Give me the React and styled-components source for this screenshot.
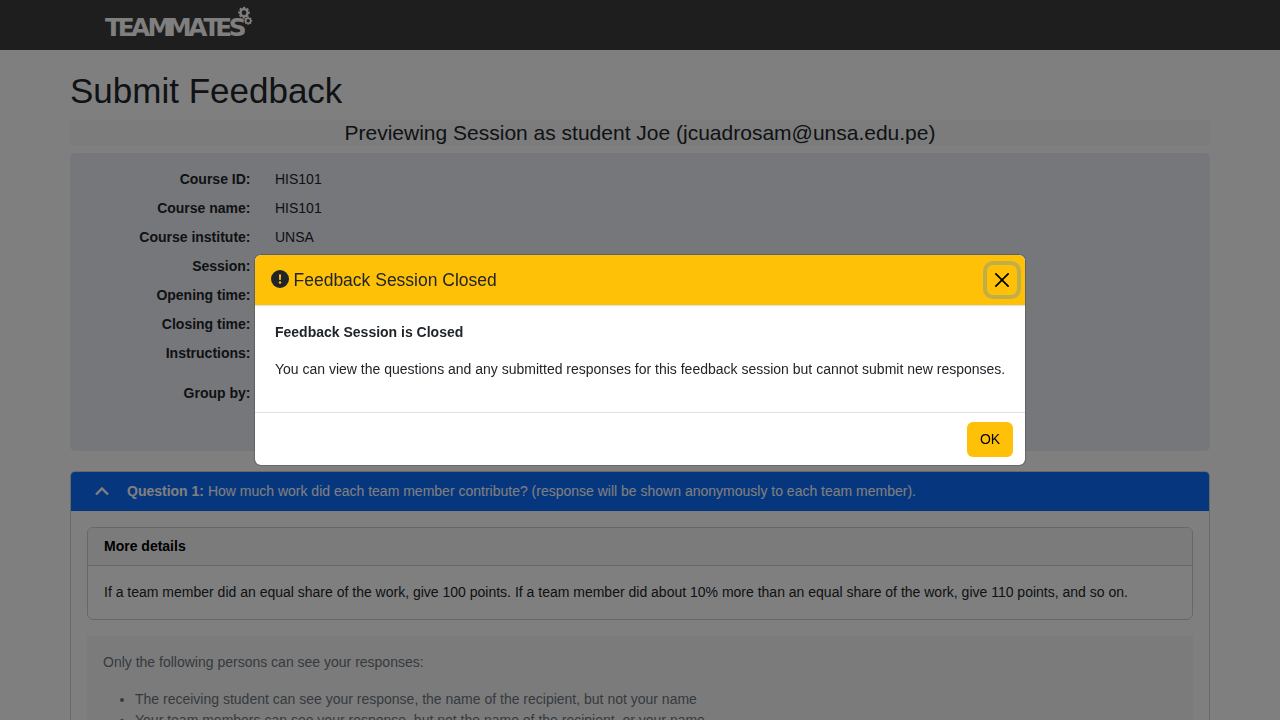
import React from "react";
import styled, { createGlobalStyle } from "styled-components";

const Global = createGlobalStyle`
  *, *::before, *::after { box-sizing: border-box; }
  html, body { margin: 0; height: 720px; overflow: hidden; }
  body {
    background: #fff;
    color: #212529;
    font: 400 14px/21px "Liberation Sans", Arial, sans-serif;
  }
  h1, h2, h5, p, ul { margin: 0; font-weight: 400; }
`;

const Page = styled.div`
  height: 720px;
  overflow: hidden;
`;

const Navbar = styled.nav`
  height: 50px;
  padding: 6px 105px;
  background: #3d3d3d;
`;

const Logo = styled.svg`
  display: block;
  overflow: visible;
  fill: #fff;
`;

const Container = styled.main`
  width: 1140px;
  margin: 0 auto;
  padding-top: 20px;
`;

const Title = styled.h1`
  font-size: 35px;
  line-height: 42px;
  margin-bottom: 8px;
`;

const PreviewBanner = styled.h2`
  font-size: 21px;
  line-height: 25px;
  margin-bottom: 8px;
  text-align: center;
  background: #f8f9fa;
`;

const InfoPanel = styled.section`
  height: 298px;
  padding: 16px;
  margin-bottom: 20px;
  border-radius: 5px;
  background: #eceef6;
`;

const InfoRow = styled.div`
  display: grid;
  grid-template-columns: 164.5px 1fr;
  column-gap: 24.5px;
  margin-bottom: ${(p) => (p.$gap ? p.$gap : 8)}px;
`;

const InfoLabel = styled.div`
  text-align: right;
  font-weight: 700;
`;

const QuestionCard = styled.section`
  border: 1px solid #d0d0d0;
  border-radius: 5px;
  background: #fff;
  overflow: hidden;
`;

const QuestionHeader = styled.header`
  display: flex;
  align-items: center;
  height: 39px;
  padding-left: 24px;
  background: #0d6efd;
  color: #fff;
  white-space: pre;
`;

const Chevron = styled.svg`
  width: 14px;
  height: 10px;
  margin-right: 18px;
  fill: none;
  stroke: #fff;
  stroke-width: 2.4;
`;

const QuestionBody = styled.div`
  padding: 16px;
`;

const DetailsCard = styled.div`
  border: 1px solid #cfcfcf;
  border-radius: 6px;
  margin-bottom: 16px;
  color: #000;
  overflow: hidden;
`;

const DetailsHeader = styled.div`
  height: 38px;
  padding: 8px 16px;
  font-weight: 700;
  background: #f7f7f7;
  border-bottom: 1px solid #cfcfcf;
`;

const DetailsBody = styled.div`
  height: 53px;
  padding: 16px;
  color: #212529;
`;

const Visibility = styled.div`
  padding: 16px;
  height: 200px;
  background: #f7f7f7;
  color: #6c757d;
`;

const VisibilityList = styled.ul`
  margin-top: 16px;
  padding-left: 32px;
`;

const Backdrop = styled.div`
  position: fixed;
  inset: 0;
  background: rgba(0, 0, 0, 0.5);
  display: flex;
  align-items: flex-start;
  justify-content: center;
  padding-top: 254px;
`;

const Modal = styled.div`
  width: 772px;
  border: 1px solid rgba(0, 0, 0, 0.175);
  border-radius: 7px;
  background: #fff;
  background-clip: padding-box;
  overflow: hidden;
`;

const ModalHeader = styled.div`
  display: flex;
  align-items: center;
  height: 51px;
  padding: 0 8px 0 16px;
  background: #ffc107;
  border-bottom: 1px solid #dee2e6;
`;

const AlertIcon = styled.svg`
  width: 18px;
  height: 18px;
  margin: 0 4.5px 2px 0;
`;

const ModalTitle = styled.h5`
  flex: 1;
  font-size: 17.5px;
  line-height: 26px;
`;

const CloseButton = styled.button`
  display: flex;
  align-items: center;
  justify-content: center;
  width: 30px;
  height: 30px;
  padding: 0;
  border: 0;
  border-radius: 6px;
  background: transparent;
  box-shadow: 0 0 0 4px rgba(134, 155, 139, 0.5);
`;

const ModalBody = styled.div`
  height: 106px;
  padding: 16px 20px;
  white-space: nowrap;
`;

const Lead = styled.p`
  font-weight: 700;
  margin-bottom: 16px;
`;

const ModalFooter = styled.div`
  display: flex;
  justify-content: flex-end;
  align-items: center;
  height: 53px;
  padding: 0 12px;
  border-top: 1px solid #dee2e6;
`;

const OkButton = styled.button`
  width: 46px;
  height: 35px;
  padding: 0;
  border: 0;
  border-radius: 6px;
  background: #ffc107;
  color: #000;
  font: inherit;
`;

const info = [
  ["Course ID:", "HIS101"],
  ["Course name:", "HIS101"],
  ["Course institute:", "UNSA"],
  ["Session:", ""],
  ["Opening time:", ""],
  ["Closing time:", ""],
  ["Instructions:", "", 19],
  ["Group by:", ""],
];

function Gear({ x, y, r }) {
  return (
    <g transform={`translate(${x} ${y})`} stroke="#fff" fill="none">
      <circle r={r * 0.62} strokeWidth={r * 0.4} />
      <circle
        r={r * 0.87}
        strokeWidth={r * 0.27}
        pathLength="16"
        strokeDasharray="1.15 0.85"
        transform="rotate(-11)"
      />
    </g>
  );
}

export default function App() {
  return (
    <>
      <Global />
      <Page>
        <Navbar>
          <Logo width="148" height="34" viewBox="0 0 148 34">
            <text
              x="0 12.800 26.2 43 62.700 84 99.5 111.4 125"
              y="30"
              transform="scale(0.99 1)"
              fontFamily="DejaVu Sans"
              fontWeight="700"
              fontSize="25"
            >
              TEAMMATES
            </text>
            <Gear x={139} y={6.7} r={5.8} />
            <Gear x={143.2} y={14.8} r={4} />
          </Logo>
        </Navbar>
        <Container>
          <Title>Submit Feedback</Title>
          <PreviewBanner>
            Previewing Session as student Joe (jcuadrosam@unsa.edu.pe)
          </PreviewBanner>
          <InfoPanel>
            {info.map(([label, value, gap]) => (
              <InfoRow key={label} $gap={gap}>
                <InfoLabel>{label}</InfoLabel>
                <div>{value}</div>
              </InfoRow>
            ))}
          </InfoPanel>
          <QuestionCard>
            <QuestionHeader>
              <Chevron viewBox="0 0 14 10">
                <path d="M1 7.500 7 1.500l6 6" />
              </Chevron>
              <b>Question 1:</b> How much work did each team member contribute? (response will be shown anonymously to each team member).
            </QuestionHeader>
            <QuestionBody>
              <DetailsCard>
                <DetailsHeader>More details</DetailsHeader>
                <DetailsBody>
                  If a team member did an equal share of the work, give 100 points. If a team member did about 10% more than an equal share of the work, give 110 points, and so on.
                </DetailsBody>
              </DetailsCard>
              <Visibility>
                <p>Only the following persons can see your responses:</p>
                <VisibilityList>
                  <li>The receiving student can see your response, the name of the recipient, but not your name</li>
                  <li>Your team members can see your response, but not the name of the recipient, or your name</li>
                </VisibilityList>
              </Visibility>
            </QuestionBody>
          </QuestionCard>
        </Container>
      </Page>
      <Backdrop>
        <Modal role="dialog">
          <ModalHeader>
            <AlertIcon viewBox="0 0 18 18">
              <circle cx="9" cy="9" r="9" fill="#212529" />
              <path d="M7.9 4.5h2.2l-.3 5.600H8.200z" fill="#ffc107" />
              <circle cx="9" cy="12.6" r="1.250" fill="#ffc107" />
            </AlertIcon>
            <ModalTitle>Feedback Session Closed</ModalTitle>
            <CloseButton aria-label="Close">
              <svg width="14" height="14" viewBox="0 0 16 16" fill="#000">
                <path d="M.293.293a1 1 0 0 1 1.414 0L8 6.586 14.293.293a1 1 0 1 1 1.414 1.414L9.414 8l6.293 6.293a1 1 0 0 1-1.414 1.414L8 9.414l-6.293 6.293a1 1 0 0 1-1.414-1.414L6.586 8 .293 1.707a1 1 0 0 1 0-1.414" />
              </svg>
            </CloseButton>
          </ModalHeader>
          <ModalBody>
            <Lead>Feedback Session is Closed</Lead>
            <p>You can view the questions and any submitted responses for this feedback session but cannot submit new responses.</p>
          </ModalBody>
          <ModalFooter>
            <OkButton>OK</OkButton>
          </ModalFooter>
        </Modal>
      </Backdrop>
    </>
  );
}
